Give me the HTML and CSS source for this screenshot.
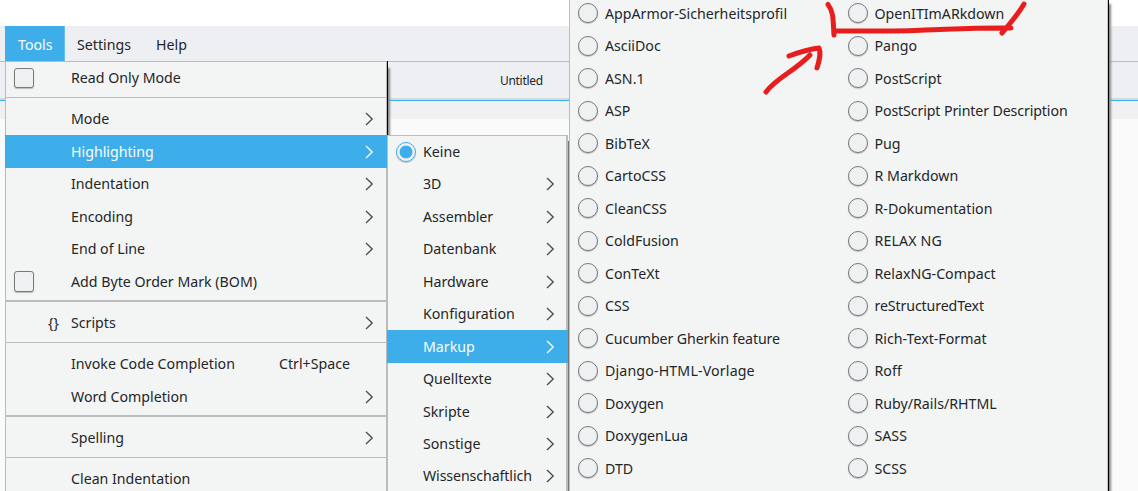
FILE: index.html
```html
<!DOCTYPE html>
<html lang="de">
<head>
<meta charset="utf-8">
<title>Untitled</title>
<link rel="stylesheet" href="styles.css">
</head>
<body>
<svg class="defs" width="0" height="0"><symbol id="chevron" viewBox="0 0 9 14"><path d="M1 1 L7.2 7 L1 13" fill="none" stroke="currentColor" stroke-width="1.35"/></symbol></svg>
<div class="window">
<div class="titlebar"></div>
<nav class="menubar"><span class="menu-title active">Tools</span><span class="menu-title">Settings</span><span class="menu-title">Help</span></nav>
<div class="tabbar"><span class="tab">Untitled</span></div>
<div class="toolbar"></div>

<div class="menu menu-tools">
  <div class="item"><i class="checkbox"></i><span>Read Only Mode</span></div>
  <hr>
  <div class="item"><span>Mode</span><svg class="chev"><use href="#chevron"/></svg></div>
  <div class="item selected"><span>Highlighting</span><svg class="chev"><use href="#chevron"/></svg></div>
  <div class="item"><span>Indentation</span><svg class="chev"><use href="#chevron"/></svg></div>
  <div class="item"><span>Encoding</span><svg class="chev"><use href="#chevron"/></svg></div>
  <div class="item"><span>End of Line</span><svg class="chev"><use href="#chevron"/></svg></div>
  <div class="item"><i class="checkbox"></i><span>Add Byte Order Mark (BOM)</span></div>
  <hr class="thick">
  <div class="item"><b class="braces">{}</b><span>Scripts</span><svg class="chev"><use href="#chevron"/></svg></div>
  <hr>
  <div class="item"><span>Invoke Code Completion</span><kbd>Ctrl+Space</kbd></div>
  <div class="item"><span>Word Completion</span><svg class="chev"><use href="#chevron"/></svg></div>
  <hr class="thick">
  <div class="item"><span>Spelling</span><svg class="chev"><use href="#chevron"/></svg></div>
  <hr>
  <div class="item last"><span>Clean Indentation</span></div>
</div>

<div class="menu menu-modes">
  <div class="item"><i class="radio checked"></i><span>Keine</span></div>
  <div class="item"><span>3D</span><svg class="chev"><use href="#chevron"/></svg></div>
  <div class="item"><span>Assembler</span><svg class="chev"><use href="#chevron"/></svg></div>
  <div class="item"><span>Datenbank</span><svg class="chev"><use href="#chevron"/></svg></div>
  <div class="item"><span>Hardware</span><svg class="chev"><use href="#chevron"/></svg></div>
  <div class="item"><span>Konfiguration</span><svg class="chev"><use href="#chevron"/></svg></div>
  <div class="item selected"><span>Markup</span><svg class="chev"><use href="#chevron"/></svg></div>
  <div class="item"><span>Quelltexte</span><svg class="chev"><use href="#chevron"/></svg></div>
  <div class="item"><span>Skripte</span><svg class="chev"><use href="#chevron"/></svg></div>
  <div class="item"><span>Sonstige</span><svg class="chev"><use href="#chevron"/></svg></div>
  <div class="item last"><span>Wissenschaftlich</span><svg class="chev"><use href="#chevron"/></svg></div>
</div>

<div class="menu menu-markup">
  <div class="column">
    <div class="item"><i class="radio"></i><span>AppArmor-Sicherheitsprofil</span></div>
    <div class="item"><i class="radio"></i><span>AsciiDoc</span></div>
    <div class="item"><i class="radio"></i><span>ASN.1</span></div>
    <div class="item"><i class="radio"></i><span>ASP</span></div>
    <div class="item"><i class="radio"></i><span>BibTeX</span></div>
    <div class="item"><i class="radio"></i><span>CartoCSS</span></div>
    <div class="item"><i class="radio"></i><span>CleanCSS</span></div>
    <div class="item"><i class="radio"></i><span>ColdFusion</span></div>
    <div class="item"><i class="radio"></i><span>ConTeXt</span></div>
    <div class="item"><i class="radio"></i><span>CSS</span></div>
    <div class="item"><i class="radio"></i><span class="tight">Cucumber Gherkin feature</span></div>
    <div class="item"><i class="radio"></i><span class="wide">Django-HTML-Vorlage</span></div>
    <div class="item"><i class="radio"></i><span>Doxygen</span></div>
    <div class="item"><i class="radio"></i><span>DoxygenLua</span></div>
    <div class="item"><i class="radio"></i><span>DTD</span></div>
  </div>
  <div class="column">
    <div class="item"><i class="radio"></i><span>OpenITImARkdown</span></div>
    <div class="item"><i class="radio"></i><span>Pango</span></div>
    <div class="item"><i class="radio"></i><span>PostScript</span></div>
    <div class="item"><i class="radio"></i><span class="tight">PostScript Printer Description</span></div>
    <div class="item"><i class="radio"></i><span>Pug</span></div>
    <div class="item"><i class="radio"></i><span>R Markdown</span></div>
    <div class="item"><i class="radio"></i><span>R-Dokumentation</span></div>
    <div class="item"><i class="radio"></i><span class="wide">RELAX NG</span></div>
    <div class="item"><i class="radio"></i><span>RelaxNG-Compact</span></div>
    <div class="item"><i class="radio"></i><span class="tight">reStructuredText</span></div>
    <div class="item"><i class="radio"></i><span>Rich-Text-Format</span></div>
    <div class="item"><i class="radio"></i><span>Roff</span></div>
    <div class="item"><i class="radio"></i><span>Ruby/Rails/RHTML</span></div>
    <div class="item"><i class="radio"></i><span>SASS</span></div>
    <div class="item"><i class="radio"></i><span>SCSS</span></div>
  </div>
</div>

<svg class="marker" viewBox="750 0 290 100" width="290" height="100">
  <path d="M828 4.5 C834 12 833 22 834 35 M836 31 C870 31 900 31.5 925 30 C955 29 980 27.5 1011 28 M1002 33 C1008 26 1017 16 1024 4"/>
  <path d="M766 92 C776 78 795 71 810 55 M789 56 C797 53 810 49 819 48 C821 52 819 62 817 68"/>
</svg>
</div>
</body>
</html>
```
FILE: styles.css
```css
body {
  margin: 0;
  background: #fafafa;
  color: #232629;
  font: 14.2px/20px "Noto Sans", "Open Sans", sans-serif;
}
.window {
  position: relative;
  width: 1138px;
  height: 491px;
  overflow: hidden;
}
.defs { position: absolute; }
.titlebar { height: 26px; background: #fff; }
.menubar {
  display: flex;
  height: 35px;
  padding-left: 5px;
  background: #eeeff2;
  border-bottom: 1px solid #bbbcbd;
}
.menu-title { padding: 9px 13px 0 12px; box-sizing: border-box; }
.menu-title.active {
  width: 60px;
  padding-left: 13px;
  padding-right: 0;
  background: #3daee9;
  color: #fcfcfc;
  border-right: 1px solid #65bdec;
}
.tabbar {
  height: 36px;
  background: #eeeff2;
  border-bottom: 2px solid #d6d9dc;
  box-shadow: 0 1px #3daee9;
}
.tab { display: block; padding: 9px 0 0 500px; font-size: 12px; letter-spacing: -.3px; }
.toolbar { height: 18px; margin-top: 1px; background: #eff0f2; }

.menu {
  position: absolute;
  box-sizing: border-box;
  background: #f3f5f4;
}
.menu-tools {
  left: 5px;
  top: 61px;
  width: 382px;
  height: 430px;
  padding-top: .5px;
  box-shadow: inset 1px 1px #bbbcbd, inset -1px 0 #bbbcbd, 1px 0 #000, 3px 7px 2px #888;
}
.menu-modes {
  left: 387px;
  top: 135px;
  width: 181px;
  height: 356px;
  padding-top: .25px;
  box-shadow: inset 1px 1px #bbbcbd, inset -2px 0 #bbbcbd, 1px 6px 1px #777;
}
.menu-markup {
  left: 569px;
  top: -3px;
  width: 539px;
  height: 494px;
  display: flex;
  box-shadow: inset 1px 0 #bbbcbd, inset -1px 0 #c7c8c8, 1px 0 #000, 3px 7px 2px #888;
}
.column { width: 270px; }
.item {
  position: relative;
  display: flex;
  align-items: center;
  height: 32.5px;
  box-sizing: border-box;
  white-space: nowrap;
}
.menu-tools .item { padding-left: 66px; padding-right: 13px; }
.menu-modes .item { padding-left: 36px; padding-right: 13px; }
.menu-markup .item { padding-left: 36px; }
.menu-markup span { padding-top: 1.4px; }
.menu-markup .tight { letter-spacing: -.12px; }
.menu-markup .wide { letter-spacing: .15px; }
.menu-tools .last { height: 28px; padding-top: 5px; }
.menu-modes .last { height: 30.7px; padding-top: 1.8px; letter-spacing: -.1px; }
.selected { background: #3daee9; color: #fcfcfc; }
.menu hr {
  height: 1px;
  margin: 3px 0 4.8px;
  border: 0;
  background: #bbbcbd;
}
.menu hr.thick { height: 2px; margin: 2.3px 0 4.5px; }
.chev { width: 9px; height: 14px; margin-left: auto; color: #4a4d50; }
.selected .chev { color: #fcfcfc; }
kbd { position: absolute; left: 274px; font: inherit; }
.braces { position: absolute; left: 43px; font-weight: 400; }
.checkbox, .radio {
  position: absolute;
  left: 8.5px;
  width: 20.5px;
  height: 20.5px;
  box-sizing: border-box;
  border: 1.5px solid #77797b;
  border-radius: 3px;
  background: #eff0f2;
  box-shadow: 0 1px 1px #bbb;
}
.radio { left: 9px; width: 20px; height: 20px; border-radius: 50%; }
.radio.checked {
  border-color: #3daee9;
  background: radial-gradient(circle, #3daee9 6px, #eff0f2 6.8px);
}
.marker {
  position: absolute;
  left: 750px;
  top: 0;
  fill: none;
  stroke: #e81e1e;
  stroke-width: 5;
  stroke-linecap: round;
  stroke-linejoin: round;
}
```
